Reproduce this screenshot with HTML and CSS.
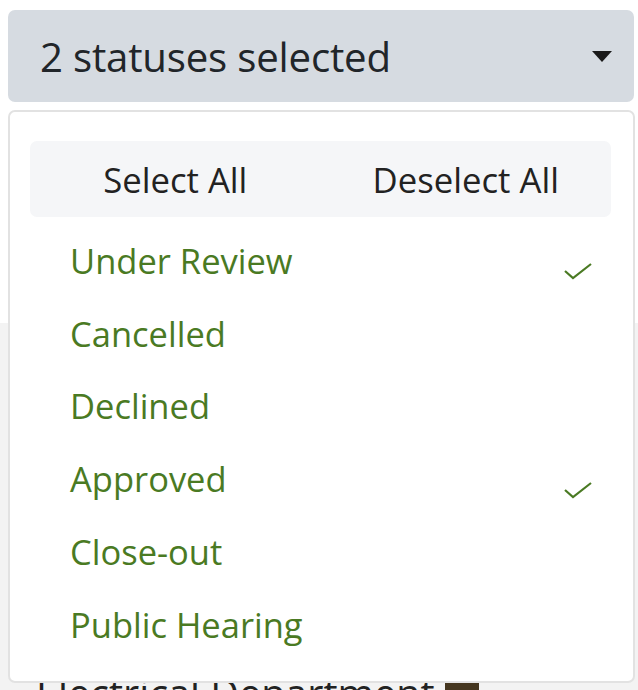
FILE: index.html
```html
<!DOCTYPE html>
<html>
<head>
<meta charset="utf-8">
<link rel="stylesheet" href="styles.css">
</head>
<body>
<div class="page">
  <div class="top">
    <button class="toggle">
      <span class="toggle-label">2 statuses selected</span>
      <span class="caret"></span>
    </button>
    <div class="focus-bar"></div>
  </div>
  <div class="lower">
    <div class="dept">Electrical Department <span class="swatch"></span></div>
  </div>
  <div class="menu">
    <div class="actions">
      <span class="action">Select All</span>
      <span class="action">Deselect All</span>
    </div>
    <ul class="options">
      <li class="option selected"><span>Under Review</span><svg class="check" viewBox="0 0 30 20" width="30" height="20"><path d="M2 10 L10 17 L28 3" fill="none" stroke="#4a7a23" stroke-width="2.2"/></svg></li>
      <li class="option"><span>Cancelled</span></li>
      <li class="option"><span>Declined</span></li>
      <li class="option selected"><span>Approved</span><svg class="check" viewBox="0 0 30 20" width="30" height="20"><path d="M2 10 L10 17 L28 3" fill="none" stroke="#4a7a23" stroke-width="2.2"/></svg></li>
      <li class="option"><span>Close-out</span></li>
      <li class="option"><span>Public Hearing</span></li>
    </ul>
  </div>
</div>
</body>
</html>
```
FILE: styles.css
```css
* { box-sizing: border-box; }
html, body { margin: 0; padding: 0; }
body {
  font-family: "Open Sans", "Noto Sans", sans-serif;
  background: #ffffff;
  width: 638px;
  height: 690px;
  overflow: hidden;
}
.page {
  position: relative;
  width: 638px;
  height: 690px;
}
.top {
  position: relative;
  height: 323px;
  background: #ffffff;
  padding: 10px 4px 0 8px;
}
.toggle {
  width: 626px;
  height: 92px;
  border: none;
  border-radius: 7px;
  background: #d6dbe1;
  display: flex;
  align-items: center;
  justify-content: space-between;
  padding: 0 22px 0 32px;
  font-family: inherit;
  cursor: pointer;
}
.toggle-label {
  font-size: 40.2px;
  letter-spacing: -0.2px;
  color: #212529;
}
.caret {
  width: 0;
  height: 0;
  border-left: 10px solid transparent;
  border-right: 10px solid transparent;
  border-top: 11px solid #1a1a1a;
}
.focus-bar {
  position: absolute;
  left: 8px;
  top: 170px;
  width: 3px;
  height: 73px;
  background: #2f5fb0;
}
.lower {
  height: 367px;
  background: #f3f3f3;
  padding: 348px 0 0 36px;
}
.dept {
  font-size: 39.5px;
  color: #222;
  line-height: 44px;
  display: flex;
  align-items: center;
  gap: 10px;
}
.swatch {
  display: inline-block;
  width: 34px;
  height: 30px;
  background: #45361f;
  border-radius: 3px;
}
.menu {
  position: absolute;
  left: 8px;
  top: 110px;
  width: 627px;
  height: 573px;
  background: #ffffff;
  border: 2px solid #e2e2e2;
  border-radius: 7px;
  padding: 29px 22px 0 20px;
}
.actions {
  height: 76px;
  background: #f5f6f8;
  border-radius: 7px;
  display: grid;
  grid-template-columns: 1fr 1fr;
  align-items: center;
  justify-items: center;
  font-size: 34.7px;
  color: #222;
}
.options {
  list-style: none;
  margin: 0;
  padding: 7px 0 0 40px;
}
.option {
  height: 72.8px;
  display: flex;
  align-items: center;
  justify-content: space-between;
  font-size: 34.5px;
  color: #4a7a23;
  padding-right: 18px;
}
.check {
  margin-top: 22px;
}
```
